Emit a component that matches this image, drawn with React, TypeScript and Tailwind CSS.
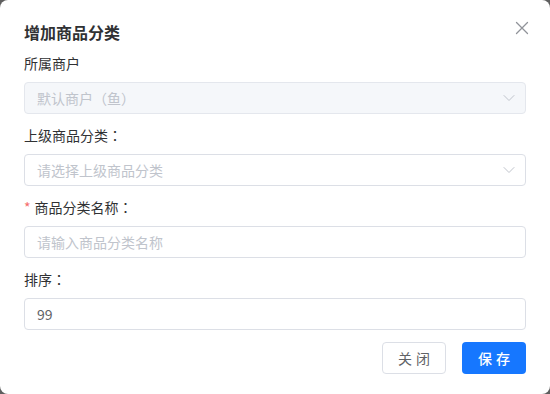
import React from "react";

const Chevron = () => (
  <svg width="14" height="14" viewBox="0 0 14 14" fill="none" className="shrink-0">
    <path d="M2 4.5 L7 9.5 L12 4.5" stroke="#c0c4cc" strokeWidth="1" strokeLinecap="round" strokeLinejoin="round" />
  </svg>
);

const Colon = () => (
  <span style={{ fontFamily: '"Noto Sans CJK TC", sans-serif' }}>：</span>
);

export default function App() {
  const font = { fontFamily: '"Noto Sans CJK SC", "Noto Sans", sans-serif' };
  return (
    <div className="w-[550px] h-[394px] bg-[#5f5f5f]" style={font}>
      <div className="w-full h-full bg-white rounded-[8px] px-6 pt-5 pb-5 flex flex-col">
        <div className="flex items-center justify-between h-6 mb-2">
          <div className="text-[16px] font-semibold text-[#303133] leading-6">增加商品分类</div>
          <svg width="14" height="14" viewBox="0 0 14 14" className="mr-[-3px] mt-[-8px]">
            <path d="M1.5 1.5 L12.5 12.5 M12.5 1.5 L1.5 12.5" stroke="#909399" strokeWidth="1.3" strokeLinecap="round" />
          </svg>
        </div>

        <div className="text-[14px] leading-[22px] text-[#303133] mb-2">所属商户</div>
        <div className="h-8 rounded-[4px] border border-[#e4e7ed] bg-[#f5f7fa] flex items-center justify-between pl-3 pr-[9px] mb-[10px]">
          <span className="text-[14px] text-[#c0c4cc]">默认商户（鱼）</span>
          <Chevron />
        </div>

        <div className="text-[14px] leading-[22px] text-[#303133] mb-2">上级商品分类<Colon /></div>
        <div className="h-8 rounded-[4px] border border-[#dcdfe6] bg-white flex items-center justify-between pl-3 pr-[9px] mb-[10px]">
          <span className="text-[14px] text-[#c0c4cc]">请选择上级商品分类</span>
          <Chevron />
        </div>

        <div className="text-[14px] leading-[22px] text-[#303133] mb-2 flex items-center">
          <span className="text-[#f56c6c] mr-1">*</span>商品分类名称<Colon />
        </div>
        <div className="h-8 rounded-[4px] border border-[#dcdfe6] bg-white flex items-center pl-3 mb-[10px]">
          <span className="text-[14px] text-[#c0c4cc]">请输入商品分类名称</span>
        </div>

        <div className="text-[14px] leading-[22px] text-[#303133] mb-2">排序<Colon /></div>
        <div className="h-8 rounded-[4px] border border-[#dcdfe6] bg-white flex items-center pl-3 mb-3">
          <span className="text-[14px] text-[#606266]">99</span>
        </div>

        <div className="flex justify-end gap-4">
          <button className="w-[64px] h-8 rounded-[4px] border border-[#dcdfe6] bg-white text-[14px] text-[#606266] tracking-[4px] pl-[4px]">关闭</button>
          <button className="w-[64px] h-8 rounded-[4px] bg-[#1677ff] text-[14px] text-white font-medium tracking-[4px] pl-[4px]">保存</button>
        </div>
      </div>
    </div>
  );
}
